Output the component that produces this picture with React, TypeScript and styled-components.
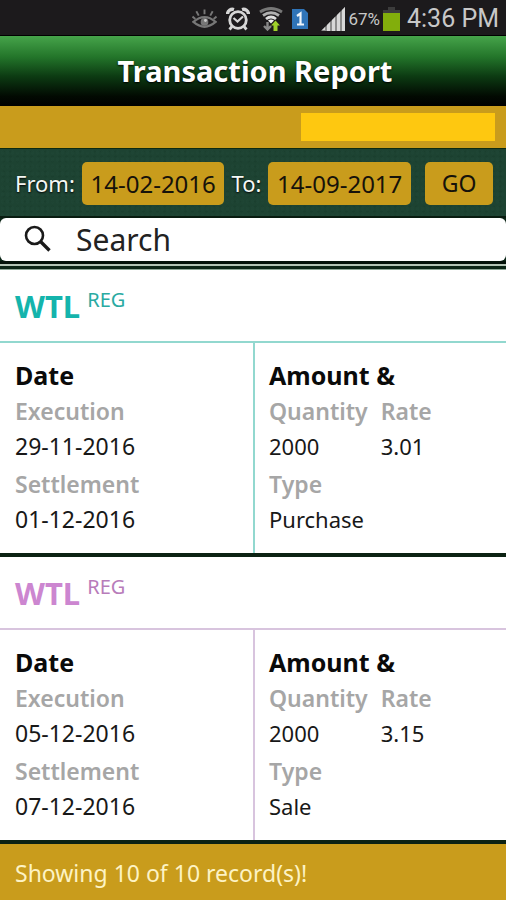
import { useState } from 'react';
import styled, { createGlobalStyle } from 'styled-components';

type Transaction = {
    id: number;
    symbol: string;
    market: string;
    execution: string;
    settlement: string;
    quantity: string;
    rate: string;
    type: string;
    color: string;
    marketColor: string;
    lineColor: string;
};

const transactions: Transaction[] = [
    {
        id: 1,
        symbol: 'WTL',
        market: 'REG',
        execution: '29-11-2016',
        settlement: '01-12-2016',
        quantity: '2000',
        rate: '3.01',
        type: 'Purchase',
        color: '#14b4ac',
        marketColor: '#2aaaa2',
        lineColor: '#92d8cf',
    },
    {
        id: 2,
        symbol: 'WTL',
        market: 'REG',
        execution: '05-12-2016',
        settlement: '07-12-2016',
        quantity: '2000',
        rate: '3.15',
        type: 'Sale',
        color: '#cc86d0',
        marketColor: '#b87cba',
        lineColor: '#d8c4de',
    },
];

const GlobalStyle = createGlobalStyle`
    * {
        box-sizing: border-box;
    }

    body {
        margin: 0;
        background: #fff;
        font-family: 'Noto Sans', 'Open Sans', sans-serif;
        color: #111;
    }

    button,
    input {
        font-family: inherit;
    }
`;

const Page = styled.div`
    min-height: 100vh;
    display: flex;
    flex-direction: column;
`;

const StatusBar = styled.div`
    height: 36px;
    padding: 2px 7px 0 0;
    display: flex;
    align-items: center;
    justify-content: flex-end;
    background: #1c1a1c;
    border-bottom: 1px solid #000;
    color: #c8c8c8;

    svg {
        display: block;
        flex: none;
    }
`;

const StatusIcons = styled.div`
    display: flex;
    align-items: center;
    gap: 9px;
    margin-right: 13px;
`;

const Battery = styled.div`
    display: flex;
    align-items: center;
    gap: 3px;
    margin-right: 7px;
    font-family: Roboto, sans-serif;
    font-size: 17px;
`;

const Clock = styled.span`
    font-family: Roboto, sans-serif;
    font-size: 25px;
    line-height: 32px;
`;

const Header = styled.header`
    height: 70px;
    display: flex;
    align-items: center;
    justify-content: center;
    background: linear-gradient(#46a44a, #23752a 30%, #0c3a12 58%, #020a02 86%, #000);
`;

const Title = styled.h1`
    margin: 0;
    padding-left: 4px;
    color: #fff;
    font-size: 29px;
    line-height: 36px;
    font-weight: 700;
    text-shadow: 0 1px 2px #000;
`;

const AccountBar = styled.div`
    height: 42px;
    padding: 7px 11px;
    display: flex;
    justify-content: flex-end;
    background: #c99c1c;
`;

const AccountName = styled.div`
    width: 40%;
    background: #fec810;
`;

const Filters = styled.form`
    height: 70px;
    padding: 1px 13px 0 15px;
    display: flex;
    align-items: center;
    background-color: #1d4332;
    background-image: radial-gradient(#21483780 1px, transparent 2px),
        radial-gradient(#193c2c80 1px, transparent 2px);
    background-size: 5px 7px, 7px 5px;
    border-top: 1px solid #0c2a12;
    border-bottom: 2px solid #081c10;
`;

const FilterLabel = styled.label`
    flex: none;
    margin-right: 7px;
    color: #f4f8f4;
    font-size: 22px;
    text-shadow: 0 1px 2px #000;
`;

const DateInput = styled.input`
    flex: 1;
    min-width: 0;
    height: 43px;
    margin-right: 7px;
    padding: 0;
    border: 0;
    border-radius: 5px;
    background: #c99c1c;
    color: #16120a;
    font-size: 24px;
    text-align: center;
`;

const GoButton = styled.button`
    flex: none;
    width: 68px;
    height: 43px;
    margin-left: 7px;
    padding: 0;
    border: 0;
    border-radius: 5px;
    background: #c99c1c;
    color: #16120a;
    font-size: 23px;
`;

const SearchArea = styled.div`
    background: #0b2516;
`;

const SearchBox = styled.div`
    height: 43px;
    padding: 0 24px;
    display: flex;
    align-items: center;
    gap: 23px;
    border-radius: 6px;
    background: #fff;

    svg {
        flex: none;
    }
`;

const SearchInput = styled.input`
    flex: 1;
    min-width: 0;
    padding: 0;
    border: 0;
    outline: 0;
    background: transparent;
    font-size: 30px;
    line-height: 40px;

    &::placeholder {
        color: #222;
        opacity: 1;
    }
`;

const SearchEdge = styled.div`
    height: 9px;
    background: linear-gradient(#04120a 3px, #b4c4b6 3px 5px, #0b2516 5px 8px, #8fa898 8px);
`;

const Card = styled.article<{ $line: string }>`
    background: #fff;
    border-bottom: 4px solid #0c2213;

    > header {
        border-bottom: 2px solid ${({ $line }) => $line};
    }

    section + section {
        padding-left: 14px;
        border-left: 2px solid ${({ $line }) => $line};
    }
`;

const CardHeader = styled.header`
    height: 73px;
    padding: 15px;
    display: flex;
    align-items: flex-start;
    gap: 7px;
`;

const Symbol = styled.h2<{ $color: string }>`
    margin: 0;
    color: ${({ $color }) => $color};
    font-size: 31px;
    line-height: 42px;
`;

const Market = styled.span<{ $color: string }>`
    color: ${({ $color }) => $color};
    font-size: 20px;
    line-height: 30px;
`;

const CardBody = styled.div`
    display: grid;
    grid-template-columns: 1fr 1fr;
`;

const Column = styled.section`
    padding: 14px 13px 14px 15px;

    h3 {
        margin: 0;
        color: #0a0a0a;
        font-size: 25px;
        line-height: 36px;
    }

    dl {
        margin: 0;
    }
`;

const Pair = styled.div`
    display: flex;
    gap: 13px;
`;

const Term = styled.dt`
    color: #a6a6a6;
    font-size: 23px;
    font-weight: 600;
    line-height: 37px;
`;

const Value = styled.dd`
    margin: 0;
    padding-bottom: 3px;
    color: #181818;
    font-size: 22px;
    line-height: 33px;
`;

const DateValue = styled(Value)`
    font-size: 23px;
`;

const Footer = styled.footer`
    flex: 1;
    min-height: 56px;
    padding: 2px 15px 0;
    display: flex;
    align-items: center;
    background: #c99c1c;
    color: #fdf3c4;
    font-size: 23px;
`;

const EyeIcon = () => (
    <svg width="25" height="22" viewBox="0 0 26 22" fill="none" stroke="#777" strokeWidth="2.400">
        <path d="M1.500 14Q13 4 24.500 14Q13 24 1.500 14Z" />
        <circle cx="13" cy="14" r="4" fill="#777" stroke="none" />
        <path d="M13 6V1M7 7.500L4.500 3M19 7.500L21.500 3M3.500 11L.5 8.500M22.500 11L25.500 8.500" strokeWidth="2" />
        <circle cx="14" cy="12.500" r="1.500" fill="#ccc" stroke="none" />
    </svg>
);

const AlarmIcon = () => (
    <svg width="24" height="24" viewBox="0 0 24 24" fill="none" stroke="#d6d6d6" strokeWidth="2.800">
        <circle cx="12" cy="13" r="8.300" />
        <path d="M7.500 11L11.500 14.500L17 9.500" strokeWidth="2.200" />
        <path d="M6 19.500L3.500 22.500M18 19.500L20.500 22.500" />
        <path d="M1.500 7A5 5 0 0 1 8 2.500M22.500 7A5 5 0 0 0 16 2.500" strokeWidth="3.400" />
    </svg>
);

const WifiIcon = () => (
    <svg width="24" height="24" viewBox="0 0 24 24" fill="none" strokeWidth="2.800">
        <path d="M1 5Q12 -2 23 5" stroke="#777" />
        <path d="M4 8.500Q12 3 20 8.500" stroke="#b0b0b0" />
        <path d="M7 12Q12 8 17 12" stroke="#ddd" />
        <path d="M9 13.500Q12 11.500 15 13.500L12 16.500Z" fill="#eee" />
        <path d="M8.500 15V22M5 19L8.500 22.500L12 19" stroke="#888" strokeWidth="2.400" />
        <path d="M14.500 24V18.500H12L16.500 13.500L21 18.500H18.500V24Z" fill="#9fd12a" />
    </svg>
);

const SimIcon = () => (
    <svg width="16" height="20" viewBox="0 0 16 20">
        <path d="M0 0H12L16 4V20H0Z" fill="#2f74b8" />
        <path d="M5 7L8.500 4.500V15M5 15.500H12" fill="none" stroke="#eef4fa" strokeWidth="2.200" />
    </svg>
);

const SignalIcon = () => (
    <svg width="24" height="24" viewBox="0 0 24 24">
        <path d="M0 24L24 0V24Z" fill="#8c8c8c" />
        <path d="M1 23H4V20L1 23ZM6 24V18L9 15V24ZM11 24V13L14 10V24ZM16 24V8L19 5V24ZM21 24V3L24 0V24Z" fill="#d8d8d8" />
    </svg>
);

const BatteryIcon = () => (
    <svg width="17" height="24" viewBox="0 0 17 24">
        <path d="M5 0H12V3H17V7H0V3H5Z" fill="#3c3c3c" />
        <rect y="6" width="17" height="18" fill="#82ae0c" />
    </svg>
);

const SearchIcon = () => (
    <svg width="29" height="29" viewBox="0 0 29 29" fill="none" stroke="#1a1a1a" strokeWidth="2.600">
        <circle cx="10.500" cy="10.500" r="8.500" />
        <path d="M16.500 16.500L25.500 25.500" strokeWidth="3.400" />
    </svg>
);

const TransactionCard = ({ item }: { item: Transaction }) => (
    <Card $line={item.lineColor}>
        <CardHeader>
            <Symbol $color={item.color}>{item.symbol}</Symbol>
            <Market $color={item.marketColor}>{item.market}</Market>
        </CardHeader>
        <CardBody>
            <Column>
                <h3>Date</h3>
                <dl>
                    <Term>Execution</Term>
                    <DateValue>{item.execution}</DateValue>
                    <Term>Settlement</Term>
                    <DateValue>{item.settlement}</DateValue>
                </dl>
            </Column>
            <Column>
                <h3>Amount &amp;</h3>
                <Pair>
                    <dl>
                        <Term>Quantity</Term>
                        <Value>{item.quantity}</Value>
                    </dl>
                    <dl>
                        <Term>Rate</Term>
                        <Value>{item.rate}</Value>
                    </dl>
                </Pair>
                <dl>
                    <Term>Type</Term>
                    <Value>{item.type}</Value>
                </dl>
            </Column>
        </CardBody>
    </Card>
);

const App = () => {
    const [from, setFrom] = useState('14-02-2016');
    const [to, setTo] = useState('14-09-2017');
    const [search, setSearch] = useState('');

    const visible = transactions.filter((item) =>
        item.symbol.toLowerCase().includes(search.toLowerCase())
    );

    return (
        <>
            <GlobalStyle />
            <Page>
                <StatusBar>
                    <StatusIcons>
                        <EyeIcon />
                        <AlarmIcon />
                        <WifiIcon />
                        <SimIcon />
                    </StatusIcons>
                    <Battery>
                        <SignalIcon />
                        <span>67%</span>
                        <BatteryIcon />
                    </Battery>
                    <Clock>4:36 PM</Clock>
                </StatusBar>
                <Header>
                    <Title>Transaction Report</Title>
                </Header>
                <AccountBar>
                    <AccountName />
                </AccountBar>
                <Filters onSubmit={(e) => e.preventDefault()}>
                    <FilterLabel htmlFor="from">From:</FilterLabel>
                    <DateInput id="from" value={from} onChange={(e) => setFrom(e.target.value)} />
                    <FilterLabel htmlFor="to">To:</FilterLabel>
                    <DateInput id="to" value={to} onChange={(e) => setTo(e.target.value)} />
                    <GoButton type="submit">GO</GoButton>
                </Filters>
                <SearchArea>
                    <SearchBox>
                        <SearchIcon />
                        <SearchInput
                            type="text"
                            aria-label="Search"
                            placeholder="Search"
                            value={search}
                            onChange={(e) => setSearch(e.target.value)}
                        />
                    </SearchBox>
                    <SearchEdge />
                </SearchArea>
                <main>
                    {visible.map((item) => (
                        <TransactionCard key={item.id} item={item} />
                    ))}
                </main>
                <Footer>Showing 10 of 10 record(s)!</Footer>
            </Page>
        </>
    );
};

export default App;
